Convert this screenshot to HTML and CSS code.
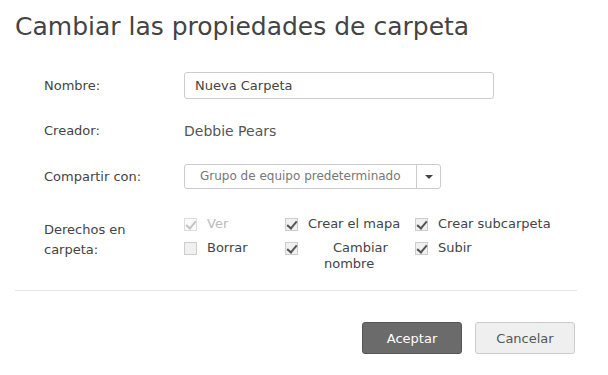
FILE: index.html
```html
<!DOCTYPE html>
<html lang="es">

<head>
    <meta charset="UTF-8">
    <meta name="viewport" content="width=device-width, initial-scale=1.0">
    <title>Cambiar las propiedades de carpeta</title>
    <link rel="stylesheet" href="styles.css">
</head>

<body>
    <div class="dialog">
        <h1>Cambiar las propiedades de carpeta</h1>

        <div class="form">
            <div class="row">
                <label for="name">Nombre:</label>
                <input type="text" id="name" value="Nueva Carpeta">
            </div>

            <div class="row">
                <span class="label">Creador:</span>
                <span class="creator">Debbie Pears</span>
            </div>

            <div class="row">
                <span class="label">Compartir con:</span>
                <div class="select">
                    <span class="select-text">Grupo de equipo predeterminado</span>
                    <span class="select-btn"><span class="caret"></span></span>
                </div>
            </div>

            <div class="row rights-row">
                <span class="label">Derechos en<br>carpeta:</span>
                <div class="rights">
                    <div class="check disabled"><span class="box on"></span><span class="text">Ver</span></div>
                    <div class="check"><span class="box on"></span><span class="text">Crear el mapa</span></div>
                    <div class="check"><span class="box on"></span><span class="text">Crear subcarpeta</span></div>
                    <div class="check"><span class="box"></span><span class="text">Borrar</span></div>
                    <div class="check"><span class="box on"></span><span class="text wrap">Cambiar<br>nombre</span></div>
                    <div class="check"><span class="box on"></span><span class="text">Subir</span></div>
                </div>
            </div>
        </div>

        <hr class="divider">

        <div class="actions">
            <button class="btn primary">Aceptar</button>
            <button class="btn">Cancelar</button>
        </div>
    </div>
</body>

</html>
```

FILE: styles.css
```css
body {
    font-family: "DejaVu Sans", Verdana, sans-serif;
    background-color: #fff;
    color: #444;
    margin: 0;
}

.dialog {
    width: 562px;
    padding: 10px 15px;
}

h1 {
    font-size: 25px;
    font-weight: normal;
    color: #444;
    margin: 2px 0 0;
    line-height: 30px;
}

.form {
    padding: 30px 0 0 29px;
}

.row {
    display: grid;
    grid-template-columns: 140px 1fr;
    align-items: center;
    font-size: 13px;
    min-height: 27px;
    margin-bottom: 18px;
}

.row:nth-child(2) {
    margin-bottom: 19px;
}

label,
.label {
    color: #444;
}

input {
    width: 310px;
    height: 27px;
    box-sizing: border-box;
    padding: 0 10px;
    border: 1px solid #ccc;
    border-radius: 3px;
    font-family: inherit;
    font-size: 13px;
    color: #444;
}

.creator {
    font-size: 14px;
    color: #555;
}

.select {
    display: flex;
    width: 257px;
    height: 25px;
    box-sizing: border-box;
    border: 1px solid #ccc;
    border-radius: 3px;
    background: #fff;
}

.select-text {
    flex: 1;
    padding-left: 15px;
    line-height: 23px;
    font-size: 12px;
    color: #777;
    white-space: nowrap;
}

.select-btn {
    width: 23px;
    border-left: 1px solid #ccc;
    display: flex;
    align-items: center;
    justify-content: center;
}

.caret {
    width: 0;
    height: 0;
    border-left: 4px solid transparent;
    border-right: 4px solid transparent;
    border-top: 4px solid #444;
}

.rights-row {
    align-items: start;
    margin-top: 24px;
    line-height: 20px;
}

.rights-row .label {
    padding-top: 6px;
}

.rights {
    display: grid;
    grid-template-columns: 101px 130px 1fr;
    row-gap: 4px;
}

.check {
    display: flex;
    align-items: flex-start;
    color: #444;
}

.box {
    width: 13px;
    height: 13px;
    box-sizing: border-box;
    border: 1px solid #ccc;
    background: #f0f0f0;
    margin: 4px 10px 0 0;
    position: relative;
}

.box.on::after {
    content: "";
    position: absolute;
    left: 3px;
    top: 0;
    width: 4px;
    height: 8px;
    border-right: 2px solid #555;
    border-bottom: 2px solid #555;
    transform: rotate(40deg);
}

.disabled .text {
    color: #bbb;
}

.disabled .box {
    border-color: #ddd;
    background: #fafafa;
}

.disabled .box.on::after {
    border-color: #c4c4c4;
}

.text.wrap {
    line-height: 16px;
    padding-left: 16px;
    padding-top: 2px;
    text-indent: 9px;
}

.divider {
    border: none;
    border-top: 1px solid #e6e6e6;
    margin: 18px 0 31px;
}

.actions {
    display: flex;
    justify-content: flex-end;
    gap: 13px;
    padding-right: 2px;
}

.btn {
    width: 100px;
    height: 32px;
    font-family: inherit;
    font-size: 13px;
    border-radius: 3px;
    border: 1px solid #ccc;
    background: #efefef;
    color: #555;
    cursor: pointer;
}

.btn.primary {
    background: #6b6b6b;
    border-color: #555;
    color: #fff;
}
```
